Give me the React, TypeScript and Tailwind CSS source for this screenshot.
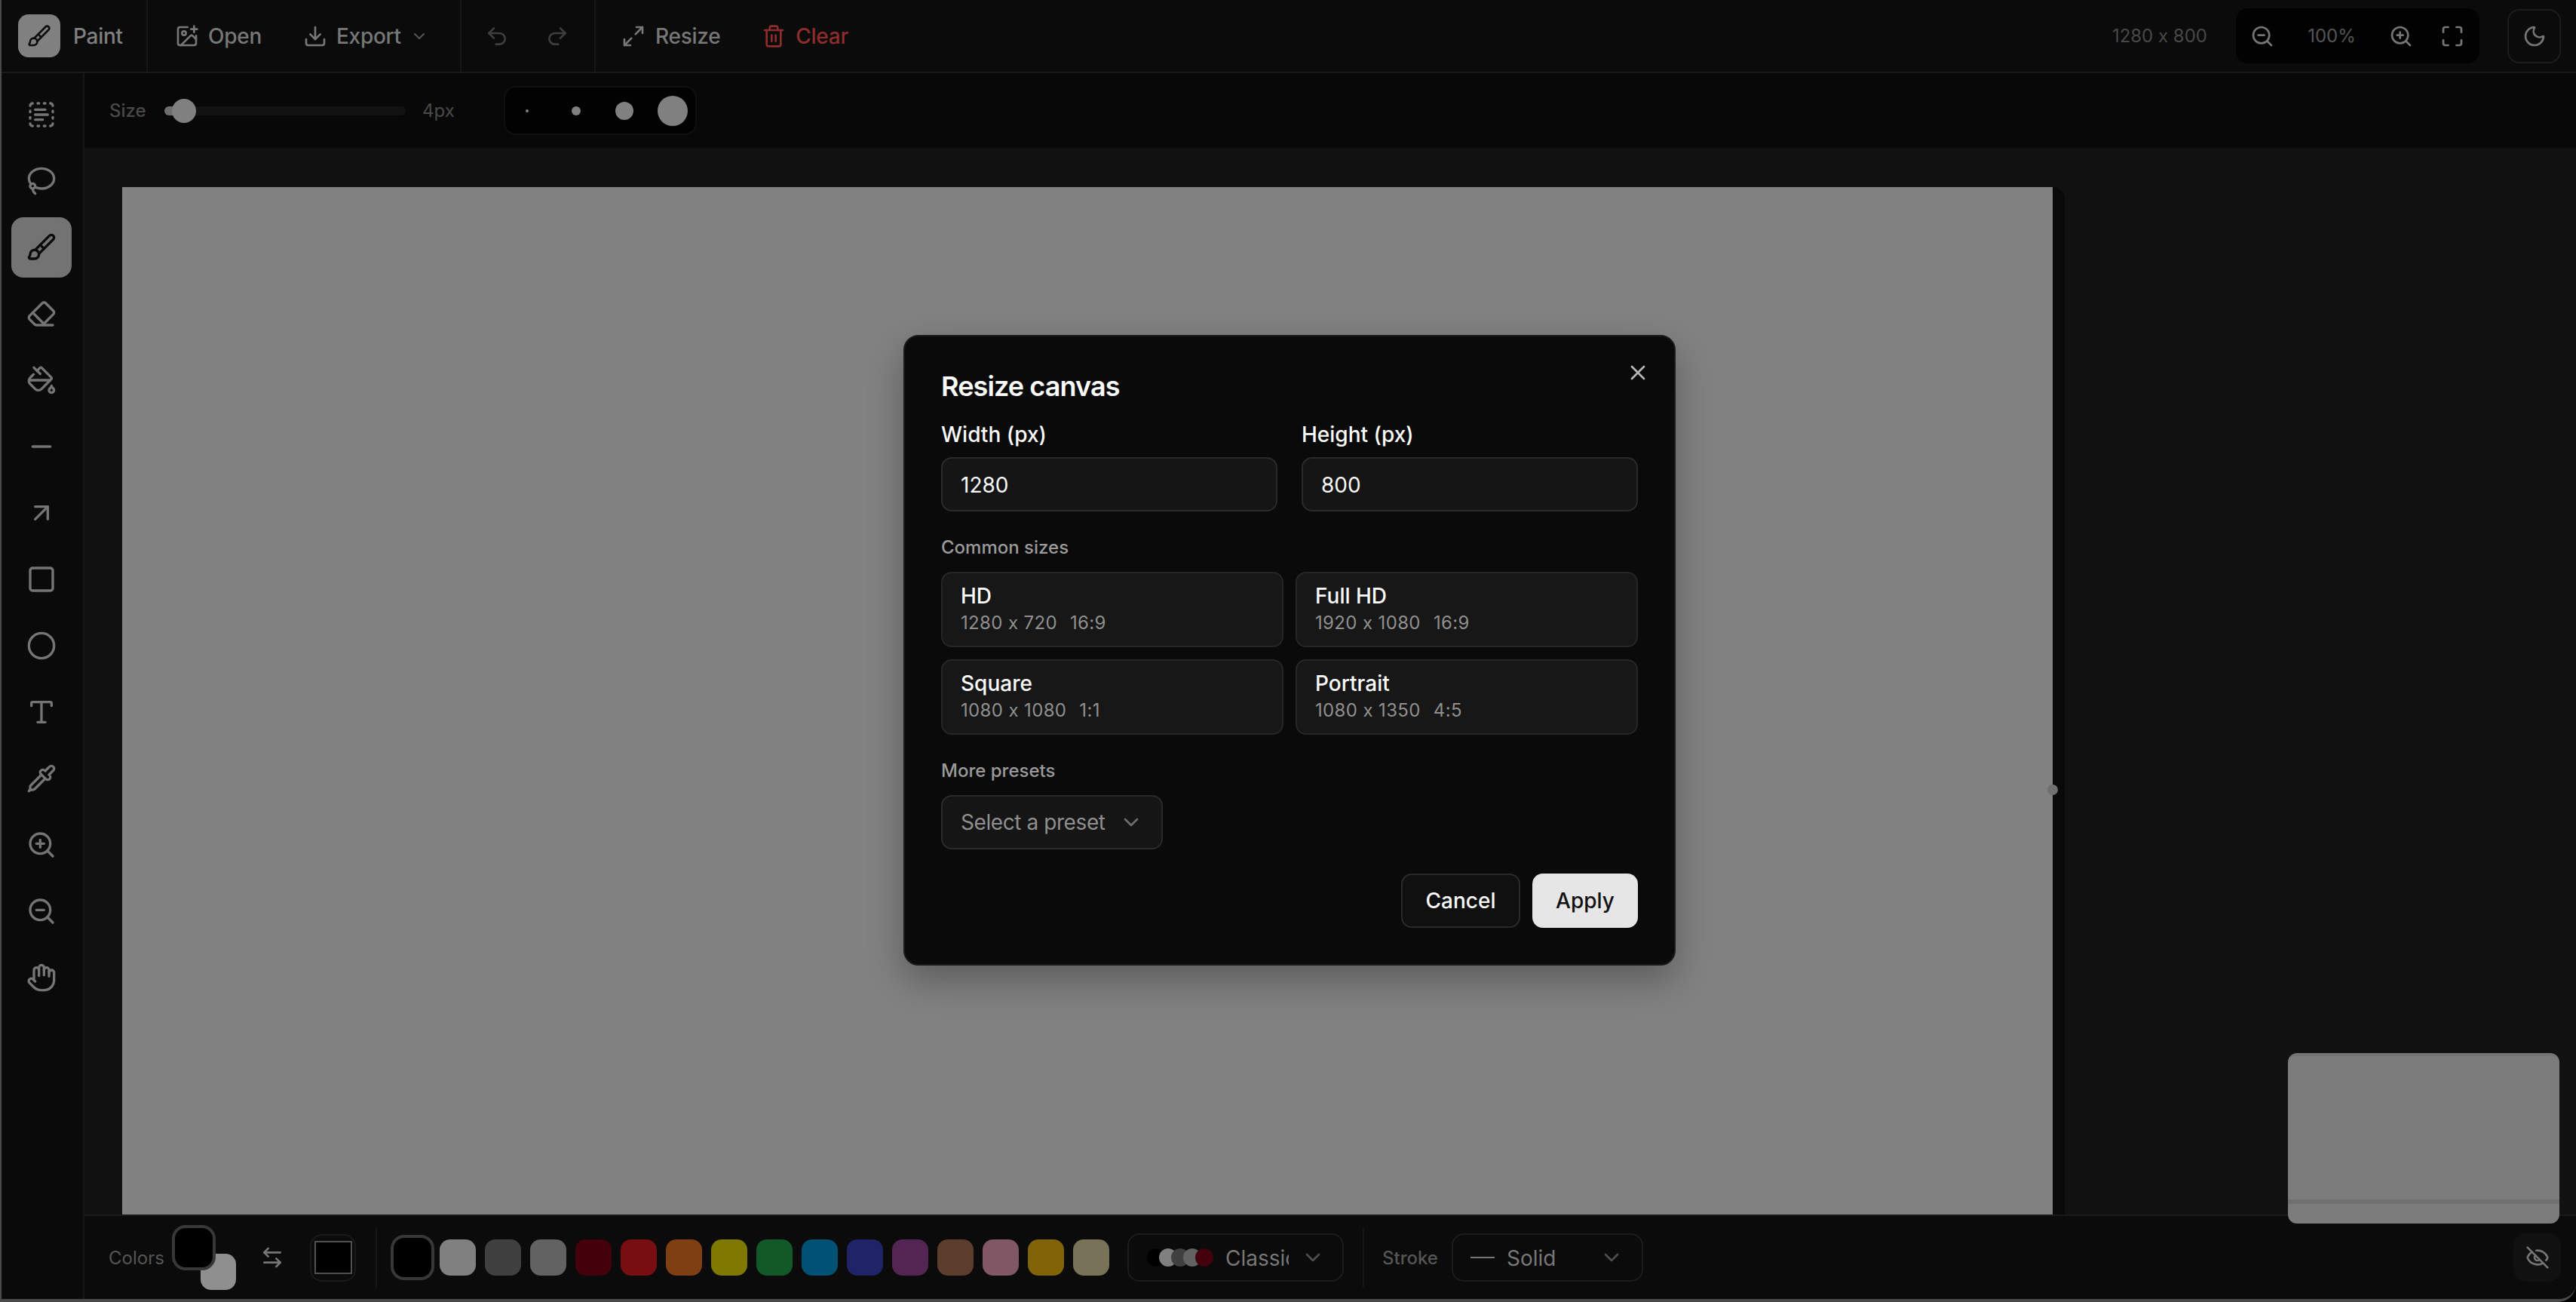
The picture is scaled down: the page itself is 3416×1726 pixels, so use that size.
import {
  ArrowLeftRight,
  ArrowUpRight,
  Brush,
  ChevronDown,
  Circle,
  Download,
  Eraser,
  EyeOff,
  Hand,
  ImagePlus,
  Lasso,
  Maximize,
  Maximize2,
  Minus,
  Moon,
  PaintBucket,
  Pipette,
  Redo2,
  Square,
  TextSelect,
  Trash2,
  Type,
  Undo2,
  X,
  ZoomIn,
  ZoomOut,
} from "lucide-react";

const tools = [TextSelect, Lasso, Brush, Eraser, PaintBucket, Minus, ArrowUpRight, Square, Circle, Type, Pipette, ZoomIn, ZoomOut, Hand];

// the classic palette, dimmed by the dialog's backdrop
const swatches = [
  "bg-[#808080]",
  "bg-[#404040]",
  "bg-[#626262]",
  "bg-[#44000b]",
  "bg-[#760e12]",
  "bg-[#803f13]",
  "bg-[#807900]",
  "bg-[#115926]",
  "bg-[#005174]",
  "bg-[#1f2466]",
  "bg-[#522552]",
  "bg-[#5d3d2b]",
  "bg-[#805764]",
  "bg-[#806407]",
  "bg-[#787258]",
];

const sizes = [
  { name: "HD", dims: "1280 x 720", ratio: "16:9" },
  { name: "Full HD", dims: "1920 x 1080", ratio: "16:9" },
  { name: "Square", dims: "1080 x 1080", ratio: "1:1" },
  { name: "Portrait", dims: "1080 x 1350", ratio: "4:5" },
];

function TopBar() {
  return (
    <header className="flex h-[97px] shrink-0 items-center border-b-2 border-[#1a1a1a] text-[28px] font-medium tracking-[-0.01em] text-[#777]">
      {/* Logo */}
      <div className="flex h-full w-[194px] shrink-0 items-center gap-[17px] border-r-2 border-[#171717] pl-[22px]">
        <div className="flex h-[57px] w-[56px] items-center justify-center rounded-[14px] bg-[#808080] text-[#0e0e0e]">
          <Brush size={32} />
        </div>
        <span className="text-[#808080]">Paint</span>
      </div>

      {/* File */}
      <div className="flex h-full w-[416px] shrink-0 items-center border-r-2 border-[#171717] pl-[36px]">
        <ImagePlus size={32} />
        <span className="ml-[12px]">Open</span>
        <Download size={32} className="ml-[55px]" />
        <span className="ml-[12px]">Export</span>
        <ChevronDown size={24} className="ml-[12px] text-[#555]" />
      </div>

      {/* History */}
      <div className="flex h-full w-[178px] shrink-0 items-center gap-[48px] border-r-2 border-[#171717] pl-[31px] text-[#3e3e3e]">
        <Undo2 size={32} />
        <Redo2 size={32} />
      </div>

      {/* Canvas actions */}
      <div className="flex h-full items-center pl-[34px]">
        <Maximize2 size={32} />
        <span className="ml-[13px]">Resize</span>
        <Trash2 size={32} className="ml-[55px] text-[#8f2c2c]" />
        <span className="ml-[13px] text-[#8f2c2c]">Clear</span>
      </div>

      {/* Right side */}
      <div className="ml-auto flex items-center pr-[20px] font-normal tracking-normal">
        <span className="text-[24px] text-[#484848]">1280 x 800</span>
        <div className="ml-[38px] flex h-[73px] w-[323px] items-center rounded-[16px] bg-[#020202] pl-[3px] text-[#757575]">
          <div className="flex w-[64px] justify-center">
            <ZoomOut size={32} />
          </div>
          <span className="w-[120px] text-center text-[24px] text-[#555]">100%</span>
          <div className="flex w-[64px] justify-center">
            <ZoomIn size={32} />
          </div>
          <div className="ml-[4px] flex w-[64px] justify-center">
            <Maximize size={32} />
          </div>
        </div>
        <div className="ml-[37px] flex h-[72px] w-[71px] items-center justify-center rounded-[16px] border-2 border-[#1c1c1c] text-[#757575]">
          <Moon size={32} />
        </div>
      </div>
    </header>
  );
}

function Sidebar() {
  return (
    <aside className="flex w-[110px] shrink-0 flex-col items-center gap-[8px] border-r-2 border-[#171717] bg-[#0a0a0a] pt-[15px] pr-[2px]">
      {tools.map((Icon, i) => (
        <div
          key={i}
          className={
            i === 2
              ? "flex h-[80px] w-[80px] items-center justify-center rounded-[16px] bg-[#737373] text-[#0a0a0a]"
              : "flex h-[80px] w-[80px] items-center justify-center rounded-[16px] text-[#757575]"
          }
        >
          <Icon size={40} />
        </div>
      ))}
    </aside>
  );
}

function SubBar() {
  return (
    <div className="flex h-[99px] shrink-0 items-center bg-[#080808] pl-[33px] text-[24px] font-medium text-[#484848]">
      <span className="w-[47px]">Size</span>
      <div className="relative ml-[26px] h-[12px] w-[320px] rounded-full bg-[#121212]">
        <div className="h-full w-[24px] rounded-l-full bg-[#6e6e6e]" />
        <div className="absolute top-[-10px] left-[10px] h-[32px] w-[32px] rounded-full bg-[#808080]" />
      </div>
      <span className="ml-[22px] w-[42px] font-normal">4px</span>
      <div className="ml-[66px] flex h-[65px] w-[256px] items-center rounded-[16px] border-2 border-[#111] bg-[#020202] pl-[27px]">
        <div className="h-[4px] w-[4px] rounded-full bg-[#808080]" />
        <div className="ml-[57px] h-[12px] w-[12px] rounded-full bg-[#808080]" />
        <div className="ml-[46px] h-[24px] w-[24px] rounded-full bg-[#808080]" />
        <div className="ml-[32px] h-[40px] w-[40px] rounded-full bg-[#808080]" />
      </div>
    </div>
  );
}

function BottomBar() {
  return (
    <div className="flex h-[112px] shrink-0 items-center border-t-2 border-[#1a1a1a] bg-[#0b0b0b] pl-[32px] text-[24px] text-[#555]">
      <span className="w-[73px] pt-[2px]">Colors</span>
      <div className="relative ml-[11px] h-[86px] w-[85px]">
        <div className="absolute top-[38px] left-[38px] h-[48px] w-[47px] rounded-[14px] bg-[#8f8f8f]" />
        <div className="absolute top-0 left-0 h-[60px] w-[58px] rounded-[18px] border-4 border-[#383838] bg-black" />
      </div>
      <ArrowLeftRight size={32} className="ml-[32px] text-[#757575]" />
      <div className="ml-[34px] flex h-[63px] w-[61px] items-center justify-center rounded-[16px] border-2 border-[#1a1a1a]">
        <div className="h-[44px] w-[50px] border-2 border-[#505050] bg-black" />
      </div>
      <div className="ml-[26px] h-[80px] w-[2px] bg-[#171717]" />

      <div className="ml-[18px] h-[60px] w-[58px] rounded-[18px] border-4 border-[#383838] bg-black" />
      <div className="ml-[7px] flex gap-[12px]">
        {swatches.map((c, i) => (
          <div key={i} className={`h-[48px] w-[48px] rounded-[14px] ${c}`} />
        ))}
      </div>

      {/* Palette select */}
      <div className="ml-[24px] flex h-[64px] w-[287px] items-center rounded-[16px] border-2 border-[#1c1c1c] pl-[24px] text-[28px] text-[#777]">
        <div className="flex w-[90px] -space-x-[8px]">
          <div className="h-[24px] w-[24px] shrink-0 rounded-full bg-black" />
          {swatches.slice(0, 4).map((c, i) => (
            <div key={i} className={`h-[24px] w-[24px] shrink-0 rounded-full ${c}`} />
          ))}
        </div>
        <span className="ml-[14px] w-[84px] overflow-hidden pt-[1px]">Classic</span>
        <ChevronDown size={32} className="ml-[16px] text-[#4e4e4e]" />
      </div>
      <div className="ml-[25px] h-[80px] w-[2px] bg-[#171717]" />

      <span className="ml-[24px] w-[75px] pt-[2px] font-medium">Stroke</span>
      <div className="ml-[17px] flex h-[64px] w-[254px] items-center rounded-[16px] border-2 border-[#1c1c1c] pl-[23px] text-[28px] text-[#777]">
        <div className="h-[2px] w-[32px] bg-[#777]" />
        <span className="ml-[16px] pt-[1px]">Solid</span>
        <ChevronDown size={32} className="ml-auto mr-[24px] text-[#4e4e4e]" />
      </div>

      <div className="ml-auto mr-[20px] flex h-[64px] w-[63px] items-center justify-center rounded-[16px] bg-[#111] text-[#757575]">
        <EyeOff size={32} />
      </div>
    </div>
  );
}

function ResizeDialog() {
  return (
    <div className="absolute top-[444px] left-[1196px] w-[1024px] rounded-[20px] border-2 border-[#1a1a1a] bg-[#0a0a0a] p-[48px] text-[#fafafa] shadow-[0_20px_50px_rgba(0,0,0,0.3)]">
      <X size={32} className="absolute top-[32px] right-[32px] text-[#b5b5b5]" />
      <h2 className="text-[36px] leading-[36px] font-semibold tracking-[-0.025em]">Resize canvas</h2>

      <div className="mt-[32px] grid grid-cols-2 gap-[32px]">
        {[
          ["Width (px)", "1280"],
          ["Height (px)", "800"],
        ].map(([label, value]) => (
          <div key={label} className="flex flex-col gap-[16px]">
            <span className="text-[28px] leading-[28px] font-medium">{label}</span>
            <input
              defaultValue={value}
              className="h-[72px] w-full rounded-[14px] border-2 border-[#2a2a2a] bg-[#151515] px-[24px] pt-[2px] text-[28px] outline-none"
            />
          </div>
        ))}
      </div>

      <div className="mt-[32px] text-[24px] leading-[32px] font-medium text-[#9a9a9a]">Common sizes</div>
      <div className="mt-[16px] grid grid-cols-2 gap-[16px]">
        {sizes.map((s) => (
          <div key={s.name} className="h-[100px] rounded-[14px] border-2 border-[#262626] bg-[#171717] px-[24px] pt-[14px]">
            <div className="text-[28px] leading-[32px] font-medium">{s.name}</div>
            <div className="mt-[4px] text-[24px] leading-[32px] tracking-[0.015em] text-[#8f8f8f]">
              {s.dims}
              <span className="ml-[17px]">{s.ratio}</span>
            </div>
          </div>
        ))}
      </div>

      <div className="mt-[32px] text-[24px] leading-[32px] font-medium text-[#9a9a9a]">More presets</div>
      <div className="mt-[16px] flex h-[72px] w-[294px] items-center rounded-[14px] border-2 border-[#2a2a2a] bg-[#151515] pl-[24px] text-[28px] tracking-[-0.015em] text-[#8f8f8f]">
        Select a preset
        <ChevronDown size={32} className="ml-auto mr-[24px] text-[#6e6e6e]" />
      </div>

      <div className="mt-[32px] flex justify-end gap-[16px] text-[28px] font-medium">
        <button className="h-[72px] w-[158px] rounded-[14px] border-2 border-[#2a2a2a] bg-[#101010]">Cancel</button>
        <button className="h-[72px] w-[140px] rounded-[14px] bg-[#e6e6e6] text-[#111]">Apply</button>
      </div>
    </div>
  );
}

export default function App() {
  return (
    <div className="bg-black">
      <div className="relative flex h-[1726px] w-[3416px] flex-col overflow-hidden rounded-br-[24px] border-b-4 border-l-2 border-[#4a4a4a] bg-[#0b0b0b] font-['Inter',sans-serif] [font-feature-settings:'calt'_0]">
        <TopBar />
        <div className="flex min-h-0 flex-1">
          <Sidebar />
          <div className="flex min-w-0 flex-1 flex-col">
            <SubBar />
            <main className="relative min-h-0 flex-1 overflow-hidden bg-[#111] pt-[52px] pl-[50px]">
              <div className="relative h-full w-[2576px] rounded-tr-[16px] bg-[#090909]">
                <div className="h-full w-[2560px] bg-[#828282]" />
                <div className="absolute top-[792px] left-[2553px] h-[14px] w-[14px] rounded-full bg-[#707070]" />
              </div>
            </main>
            <BottomBar />
          </div>
        </div>

        {/* Minimap */}
        <div className="absolute top-[1396px] right-[22px] h-[226px] w-[360px] overflow-hidden rounded-[12px] border-t-4 border-[#747474] bg-[#7c7c7c]">
          <div className="mt-[190px] h-[6px] bg-[#707070]" />
        </div>

        <ResizeDialog />
      </div>
    </div>
  );
}
